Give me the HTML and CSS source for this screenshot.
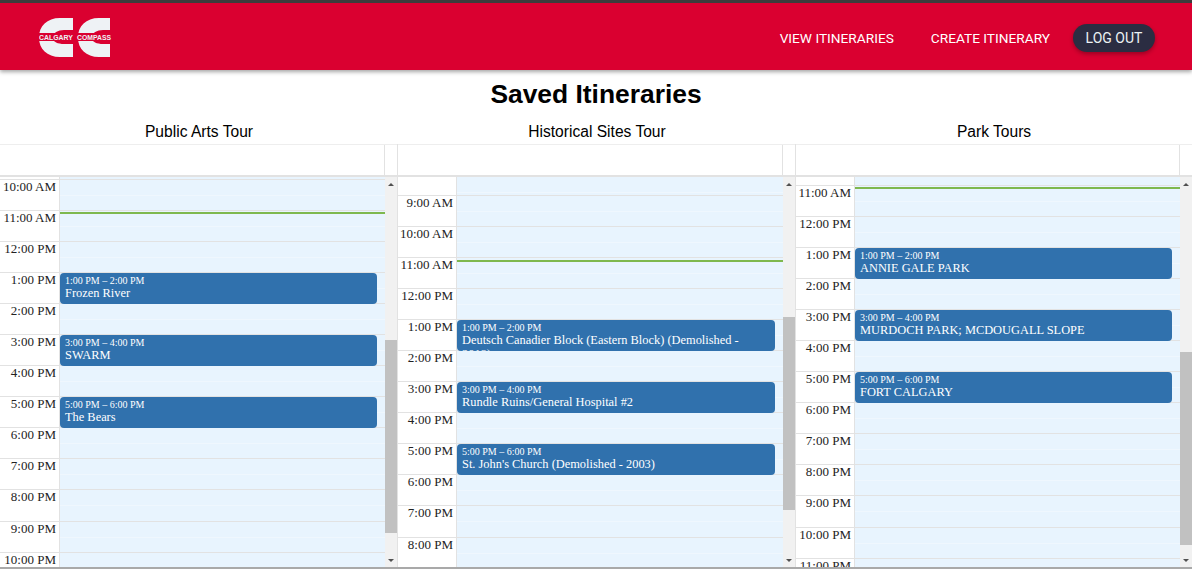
FILE: index.html
```html
<!DOCTYPE html>
<html lang="en">
<head>
<meta charset="UTF-8" />
<meta name="viewport" content="width=device-width, initial-scale=1" />
<title>Saved Itineraries - Calgary Compass</title>
<link rel="stylesheet" href="styles.css">
</head>
<body>

<div class="page">

<header class="topbar">
  <svg class="logo" width="73" height="40" viewBox="0 0 73 40" role="img" aria-label="Calgary Compass">
    <path class="logo-c" d="M34 0H21C8 0 0 8 0 19.5S8 39 21 39H34V26H25C19 26 14 24 13 19.5C14 15 19 12 25 12H34Z" />
    <path class="logo-c" d="M71 0H60C47 0 39 8 39 19.5S47 39 60 39H71V26H64C58 26 53 24 52 19.5C53 15 58 12 64 12H71Z" />
    <rect class="logo-band" x="0" y="15" width="72" height="8" />
    <text class="logo-text" x="0" y="22" textLength="34" lengthAdjust="spacingAndGlyphs">CALGARY</text>
    <text class="logo-text" x="38" y="22" textLength="34" lengthAdjust="spacingAndGlyphs">COMPASS</text>
  </svg>
  <nav class="nav">
    <a class="nav-link" href="#">View Itineraries</a>
    <a class="nav-link" href="#">Create Itinerary</a>
    <button class="logout">Log Out</button>
  </nav>
</header>

<h1>Saved Itineraries</h1>

<div class="columns">

  <section class="column">
    <h2>Public Arts Tour</h2>
    <div class="cal">
      <div class="cal-head"><div class="cal-head-main"></div><div class="cal-head-gutter"></div></div>
      <div class="cal-body">
        <div class="cal-scroll">
          <div class="hour lead-a"><div class="time"></div><div class="slot"></div></div>
          <div class="hour"><div class="time">10:00 AM</div><div class="slot"></div></div>
          <div class="hour"><div class="time">11:00 AM</div><div class="slot"><div class="now now-a"></div></div></div>
          <div class="hour"><div class="time">12:00 PM</div><div class="slot"></div></div>
          <div class="hour"><div class="time">1:00 PM</div><div class="slot">
            <div class="event"><div class="event-time">1:00 PM – 2:00 PM</div><div class="event-title">Frozen River</div></div>
          </div></div>
          <div class="hour"><div class="time">2:00 PM</div><div class="slot"></div></div>
          <div class="hour"><div class="time">3:00 PM</div><div class="slot">
            <div class="event"><div class="event-time">3:00 PM – 4:00 PM</div><div class="event-title">SWARM</div></div>
          </div></div>
          <div class="hour"><div class="time">4:00 PM</div><div class="slot"></div></div>
          <div class="hour"><div class="time">5:00 PM</div><div class="slot">
            <div class="event"><div class="event-time">5:00 PM – 6:00 PM</div><div class="event-title">The Bears</div></div>
          </div></div>
          <div class="hour"><div class="time">6:00 PM</div><div class="slot"></div></div>
          <div class="hour"><div class="time">7:00 PM</div><div class="slot"></div></div>
          <div class="hour"><div class="time">8:00 PM</div><div class="slot"></div></div>
          <div class="hour"><div class="time">9:00 PM</div><div class="slot"></div></div>
          <div class="hour"><div class="time">10:00 PM</div><div class="slot"></div></div>
        </div>
        <div class="scrollbar thumb-a">
          <div class="arrow-up"></div>
          <div class="thumb"></div>
          <div class="arrow-down"></div>
        </div>
      </div>
    </div>
  </section>

  <section class="column">
    <h2>Historical Sites Tour</h2>
    <div class="cal">
      <div class="cal-head"><div class="cal-head-main"></div><div class="cal-head-gutter"></div></div>
      <div class="cal-body">
        <div class="cal-scroll">
          <div class="hour lead-b"><div class="time"></div><div class="slot"></div></div>
          <div class="hour"><div class="time">9:00 AM</div><div class="slot"></div></div>
          <div class="hour"><div class="time">10:00 AM</div><div class="slot"></div></div>
          <div class="hour"><div class="time">11:00 AM</div><div class="slot"><div class="now now-b"></div></div></div>
          <div class="hour"><div class="time">12:00 PM</div><div class="slot"></div></div>
          <div class="hour"><div class="time">1:00 PM</div><div class="slot">
            <div class="event"><div class="event-time">1:00 PM – 2:00 PM</div><div class="event-title">Deutsch Canadier Block (Eastern Block) (Demolished - 2018)</div></div>
          </div></div>
          <div class="hour"><div class="time">2:00 PM</div><div class="slot"></div></div>
          <div class="hour"><div class="time">3:00 PM</div><div class="slot">
            <div class="event"><div class="event-time">3:00 PM – 4:00 PM</div><div class="event-title">Rundle Ruins/General Hospital #2</div></div>
          </div></div>
          <div class="hour"><div class="time">4:00 PM</div><div class="slot"></div></div>
          <div class="hour"><div class="time">5:00 PM</div><div class="slot">
            <div class="event"><div class="event-time">5:00 PM – 6:00 PM</div><div class="event-title">St. John's Church (Demolished - 2003)</div></div>
          </div></div>
          <div class="hour"><div class="time">6:00 PM</div><div class="slot"></div></div>
          <div class="hour"><div class="time">7:00 PM</div><div class="slot"></div></div>
          <div class="hour"><div class="time">8:00 PM</div><div class="slot"></div></div>
        </div>
        <div class="scrollbar thumb-b">
          <div class="arrow-up"></div>
          <div class="thumb"></div>
          <div class="arrow-down"></div>
        </div>
      </div>
    </div>
  </section>

  <section class="column">
    <h2>Park Tours</h2>
    <div class="cal">
      <div class="cal-head"><div class="cal-head-main"></div><div class="cal-head-gutter"></div></div>
      <div class="cal-body">
        <div class="cal-scroll">
          <div class="hour lead-c"><div class="time"></div><div class="slot"></div></div>
          <div class="hour"><div class="time">11:00 AM</div><div class="slot"><div class="now now-c"></div></div></div>
          <div class="hour"><div class="time">12:00 PM</div><div class="slot"></div></div>
          <div class="hour"><div class="time">1:00 PM</div><div class="slot">
            <div class="event"><div class="event-time">1:00 PM – 2:00 PM</div><div class="event-title">ANNIE GALE PARK</div></div>
          </div></div>
          <div class="hour"><div class="time">2:00 PM</div><div class="slot"></div></div>
          <div class="hour"><div class="time">3:00 PM</div><div class="slot">
            <div class="event"><div class="event-time">3:00 PM – 4:00 PM</div><div class="event-title">MURDOCH PARK; MCDOUGALL SLOPE</div></div>
          </div></div>
          <div class="hour"><div class="time">4:00 PM</div><div class="slot"></div></div>
          <div class="hour"><div class="time">5:00 PM</div><div class="slot">
            <div class="event"><div class="event-time">5:00 PM – 6:00 PM</div><div class="event-title">FORT CALGARY</div></div>
          </div></div>
          <div class="hour"><div class="time">6:00 PM</div><div class="slot"></div></div>
          <div class="hour"><div class="time">7:00 PM</div><div class="slot"></div></div>
          <div class="hour"><div class="time">8:00 PM</div><div class="slot"></div></div>
          <div class="hour"><div class="time">9:00 PM</div><div class="slot"></div></div>
          <div class="hour"><div class="time">10:00 PM</div><div class="slot"></div></div>
          <div class="hour"><div class="time">11:00 PM</div><div class="slot"></div></div>
        </div>
        <div class="scrollbar thumb-c">
          <div class="arrow-up"></div>
          <div class="thumb"></div>
          <div class="arrow-down"></div>
        </div>
      </div>
    </div>
  </section>

</div>

</div>

</body>
</html>
```
FILE: styles.css
```css
html, body {
  margin: 0;
  height: 100%;
  overflow: hidden;
}
body {
  font-family: "Liberation Sans", Arial, sans-serif;
  background: #fff;
  color: #000;
}
.page {
  height: 569px;
  box-sizing: border-box;
  display: flex;
  flex-direction: column;
  border-bottom: 2px solid #a9a9a9;
}
.topbar {
  height: 70px;
  box-sizing: border-box;
  flex-shrink: 0;
  border-top: 3px solid #3c3c3c;
  background: #da0030;
  box-shadow: 0 2px 4px rgba(0,0,0,0.35);
  display: flex;
  justify-content: space-between;
  align-items: center;
  padding: 0 37px 0 39px;
}
.logo {
  display: block;
  margin-top: 3px;
}
.logo-c {
  fill: #eef2f5;
}
.logo-band {
  fill: #da0030;
}
.logo-text {
  fill: #eef2f5;
  font-family: "Liberation Sans", Arial, sans-serif;
  font-size: 7.4px;
  font-weight: bold;
}
.nav {
  display: flex;
  align-items: center;
  margin-top: 3px;
}
.nav-link {
  color: #fff;
  font-family: Roboto, Arial, sans-serif;
  font-size: 13.7px;
  text-transform: uppercase;
  text-decoration: none;
  margin-right: 37px;
}
.nav-link:last-of-type {
  margin-right: 23px;
}
.logout {
  width: 82px;
  height: 28px;
  padding: 0;
  border: none;
  border-radius: 14px;
  background: #2b2d42;
  color: #edf2f4;
  font-family: Roboto, Arial, sans-serif;
  font-size: 14px;
  text-transform: uppercase;
  box-shadow: 0 2px 4px rgba(0,0,0,0.3);
}
h1 {
  margin: 8px 0 0;
  font-size: 26.4px;
  line-height: 32px;
  text-align: center;
}
.columns {
  flex: 1;
  min-height: 0;
  display: grid;
  grid-template-columns: 398px 398px 1fr;
}
.column {
  min-width: 0;
  min-height: 0;
  display: flex;
  flex-direction: column;
}
h2 {
  margin: 9px 0 0;
  height: 25px;
  font-size: 15.6px;
  font-weight: normal;
  line-height: 26px;
  text-align: center;
}
.cal {
  flex: 1;
  min-height: 0;
  display: flex;
  flex-direction: column;
  border-right: 1px solid #e2e2e2;
}
.column:last-child .cal {
  border-right: none;
}
.cal-head {
  height: 33px;
  box-sizing: border-box;
  flex-shrink: 0;
  display: flex;
  border-top: 1px solid #eee;
  border-bottom: 2px solid #e2e2e2;
}
.cal-head-main {
  flex: 1;
  border-right: 1px solid #e2e2e2;
}
.cal-head-gutter {
  width: 12px;
}
.cal-body {
  flex: 1;
  min-height: 0;
  display: flex;
}
.cal-scroll {
  flex: 1;
  min-width: 0;
  overflow: hidden;
}
.hour {
  height: 31.05px;
  box-sizing: border-box;
  display: flex;
  border-bottom: 1px solid #e2e2e2;
}
.lead-a { height: 3px; }
.lead-b { height: 19px; }
.lead-c { height: 9px; }
.time {
  width: 60px;
  box-sizing: border-box;
  flex-shrink: 0;
  padding: 0 3px 0 0;
  font-family: "Liberation Serif", "Times New Roman", serif;
  font-size: 13px;
  line-height: 13px;
  text-align: right;
  color: #222;
  border-right: 1px solid #e2e2e2;
}
.column + .column .time {
  width: 59px;
}
.slot {
  flex: 1;
  position: relative;
  background: linear-gradient(#e8f4fe 0, #e8f4fe 15px, #eff7fe 15px, #eff7fe 16px, #e8f4fe 16px);
}
.now {
  position: absolute;
  left: 0;
  right: 0;
  height: 2px;
  background: #7fb84e;
}
.now-a { top: 1px; }
.now-b { top: 2px; }
.now-c { top: 1px; }
.event {
  position: absolute;
  z-index: 1;
  left: 0;
  right: 8px;
  top: 0;
  height: 31px;
  box-sizing: border-box;
  padding: 2px 5px;
  overflow: hidden;
  border-radius: 4px;
  background: #3071ad;
  color: #fff;
  font-family: "Liberation Serif", "Times New Roman", serif;
}
.event-time {
  font-size: 10px;
  line-height: 11px;
}
.event-title {
  font-size: 12.4px;
  line-height: 14px;
}
.scrollbar {
  width: 12px;
  flex-shrink: 0;
  position: relative;
  background: #f1f1f1;
}
.thumb {
  background: #c1c1c1;
  height: 193px;
}
.thumb-a .thumb { margin-top: 163px; }
.thumb-b .thumb { margin-top: 140px; }
.thumb-c .thumb { margin-top: 175px; }
.arrow-up, .arrow-down {
  position: absolute;
  left: 3px;
  width: 0;
  height: 0;
  border-left: 3px solid transparent;
  border-right: 3px solid transparent;
}
.arrow-up {
  top: 6px;
  border-bottom: 3px solid #505050;
}
.arrow-down {
  bottom: 5px;
  border-top: 3px solid #505050;
}
```
